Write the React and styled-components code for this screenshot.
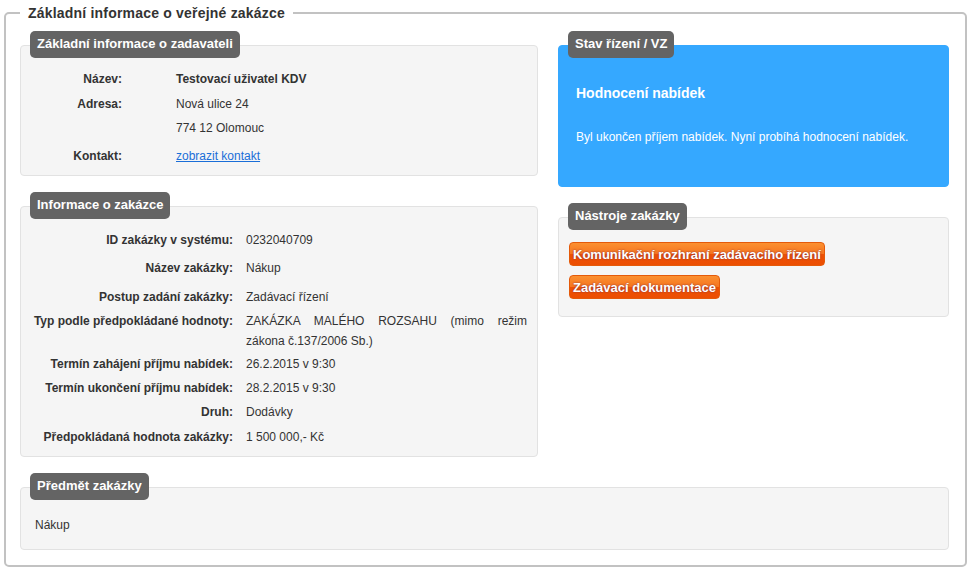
import React from 'react';
import styled, { createGlobalStyle } from 'styled-components';

const Global = createGlobalStyle`
    body {
        margin: 0;
        background: #fff;
        font-family: "Liberation Sans", Arial, sans-serif;
        font-size: 12px;
        color: #333;
    }
`;

const Frame = styled.fieldset`
    margin: 3px 3px 0 4px;
    padding: 8px 16px 15px 14px;
    border: 2px solid #c2c2c2;
    border-radius: 5px;
    min-height: 0;
`;

const FrameTitle = styled.legend`
    margin-left: 0;
    padding: 0 8px;
    font-size: 14px;
    font-weight: bold;
    letter-spacing: 0.2px;
    line-height: 20px;
    color: #333;
`;

const Columns = styled.div`
    display: grid;
    grid-template-columns: 518px 391px;
    column-gap: 20px;
    align-items: start;
`;

const Column = styled.div`
    display: flex;
    flex-direction: column;
    gap: 16px;
`;

const Panel = styled.div`
    margin-top: 14px;
    background: ${p => (p.$blue ? '#35a8ff' : '#f5f5f5')};
    border: 1px solid ${p => (p.$blue ? '#35a8ff' : '#e2e2e2')};
    border-radius: 4px;
    color: ${p => (p.$blue ? '#fff' : '#333')};
    min-height: ${p => p.$h || 0}px;
    box-sizing: border-box;
`;

const Tab = styled.div`
    width: fit-content;
    margin: -15px 0 0 ${p => p.$ml || 9}px;
    padding: 0 7px;
    height: 27px;
    line-height: 26px;
    background: #646464;
    color: #fff;
    font-size: 13px;
    font-weight: bold;
    border-radius: 5px;
`;

const Rows = styled.div`
    display: grid;
    grid-template-columns: ${p => p.$label}px 1fr;
    column-gap: ${p => p.$gap}px;
    padding: ${p => p.$pad};
`;

const Label = styled.div`
    text-align: right;
    font-weight: bold;
    line-height: 20px;
    padding-top: ${p => p.$pt || 0}px;
`;

const Value = styled.div`
    line-height: 20px;
    text-align: justify;
    padding-top: ${p => p.$pt || 0}px;
`;

const Link = styled.a`
    color: #1a6ed8;
    text-decoration: underline;
    cursor: pointer;
`;

const StateTitle = styled.div`
    padding: 25px 0 0 17px;
    font-size: 14px;
    font-weight: bold;
    line-height: 20px;
`;

const StateText = styled.div`
    padding: 24px 0 0 17px;
    line-height: 20px;
`;

const Tools = styled.div`
    display: flex;
    flex-direction: column;
    align-items: flex-start;
    gap: 9px;
    padding: 12px 0 15px 10px;
`;

const Button = styled.div`
    height: 24px;
    line-height: 23px;
    padding: 0 3px;
    box-sizing: border-box;
    border: 1px solid #e45a0a;
    border-radius: 4px;
    background: linear-gradient(#fb9030, #f67520 50%, #ee5205 51%, #ec4e02);
    color: #fff;
    font-size: 13px;
    font-weight: bold;
    text-shadow: 0 0 2px #7a2a40;
    cursor: pointer;
`;

const Subject = styled.div`
    padding: 15px 0 12px 14px;
    line-height: 20px;
`;

const Bottom = styled.div`
    padding-top: 16px;
`;

const zadavatel = [
    ['Název:', <b>Testovací uživatel KDV</b>, 0],
    ['Adresa:', 'Nová ulice 24', 5],
    ['', '774 12 Olomouc', 4],
    ['Kontakt:', <Link>zobrazit kontakt</Link>, 8],
];

const zakazka = [
    ['ID zakázky v systému:', '0232040709', 0],
    ['Název zakázky:', 'Nákup', 8],
    ['Postup zadání zakázky:', 'Zadávací řízení', 9],
    ['Typ podle předpokládané hodnoty:', 'ZAKÁZKA MALÉHO ROZSAHU (mimo režim zákona č.137/2006 Sb.)', 4],
    ['Termín zahájení příjmu nabídek:', '26.2.2015 v 9:30', 3],
    ['Termín ukončení příjmu nabídek:', '28.2.2015 v 9:30', 4],
    ['Druh:', 'Dodávky', 4],
    ['Předpokládaná hodnota zakázky:', '1 500 000,- Kč', 5],
];

const renderRows = rows =>
    rows.map(([l, v, pt], i) => (
        <React.Fragment key={i}>
            <Label $pt={pt}>{l}</Label>
            <Value $pt={pt}>{v}</Value>
        </React.Fragment>
    ));

const App = () => {
    return (
        <>
            <Global />
            <Frame>
                <FrameTitle>Základní informace o veřejné zakázce</FrameTitle>
                <Columns>
                    <Column>
                        <Panel $h={131}>
                            <Tab>Základní informace o zadavateli</Tab>
                            <Rows $label={101} $gap={54} $pad="11px 10px 8px 0">
                                {renderRows(zadavatel)}
                            </Rows>
                        </Panel>
                        <Panel $h={251}>
                            <Tab>Informace o zakázce</Tab>
                            <Rows $label={212} $gap={13} $pad="11px 10px 8px 0">
                                {renderRows(zakazka)}
                            </Rows>
                        </Panel>
                    </Column>
                    <Column>
                        <Panel $blue $h={142}>
                            <Tab>Stav řízení / VZ</Tab>
                            <StateTitle>Hodnocení nabídek</StateTitle>
                            <StateText>Byl ukončen příjem nabídek. Nyní probíhá hodnocení nabídek.</StateText>
                        </Panel>
                        <Panel $h={100}>
                            <Tab>Nástroje zakázky</Tab>
                            <Tools>
                                <Button>Komunikační rozhraní zadávacího řízení</Button>
                                <Button>Zadávací dokumentace</Button>
                            </Tools>
                        </Panel>
                    </Column>
                </Columns>
                <Bottom>
                    <Panel $h={63}>
                        <Tab>Předmět zakázky</Tab>
                        <Subject>Nákup</Subject>
                    </Panel>
                </Bottom>
            </Frame>
        </>
    );
};

export default App;
